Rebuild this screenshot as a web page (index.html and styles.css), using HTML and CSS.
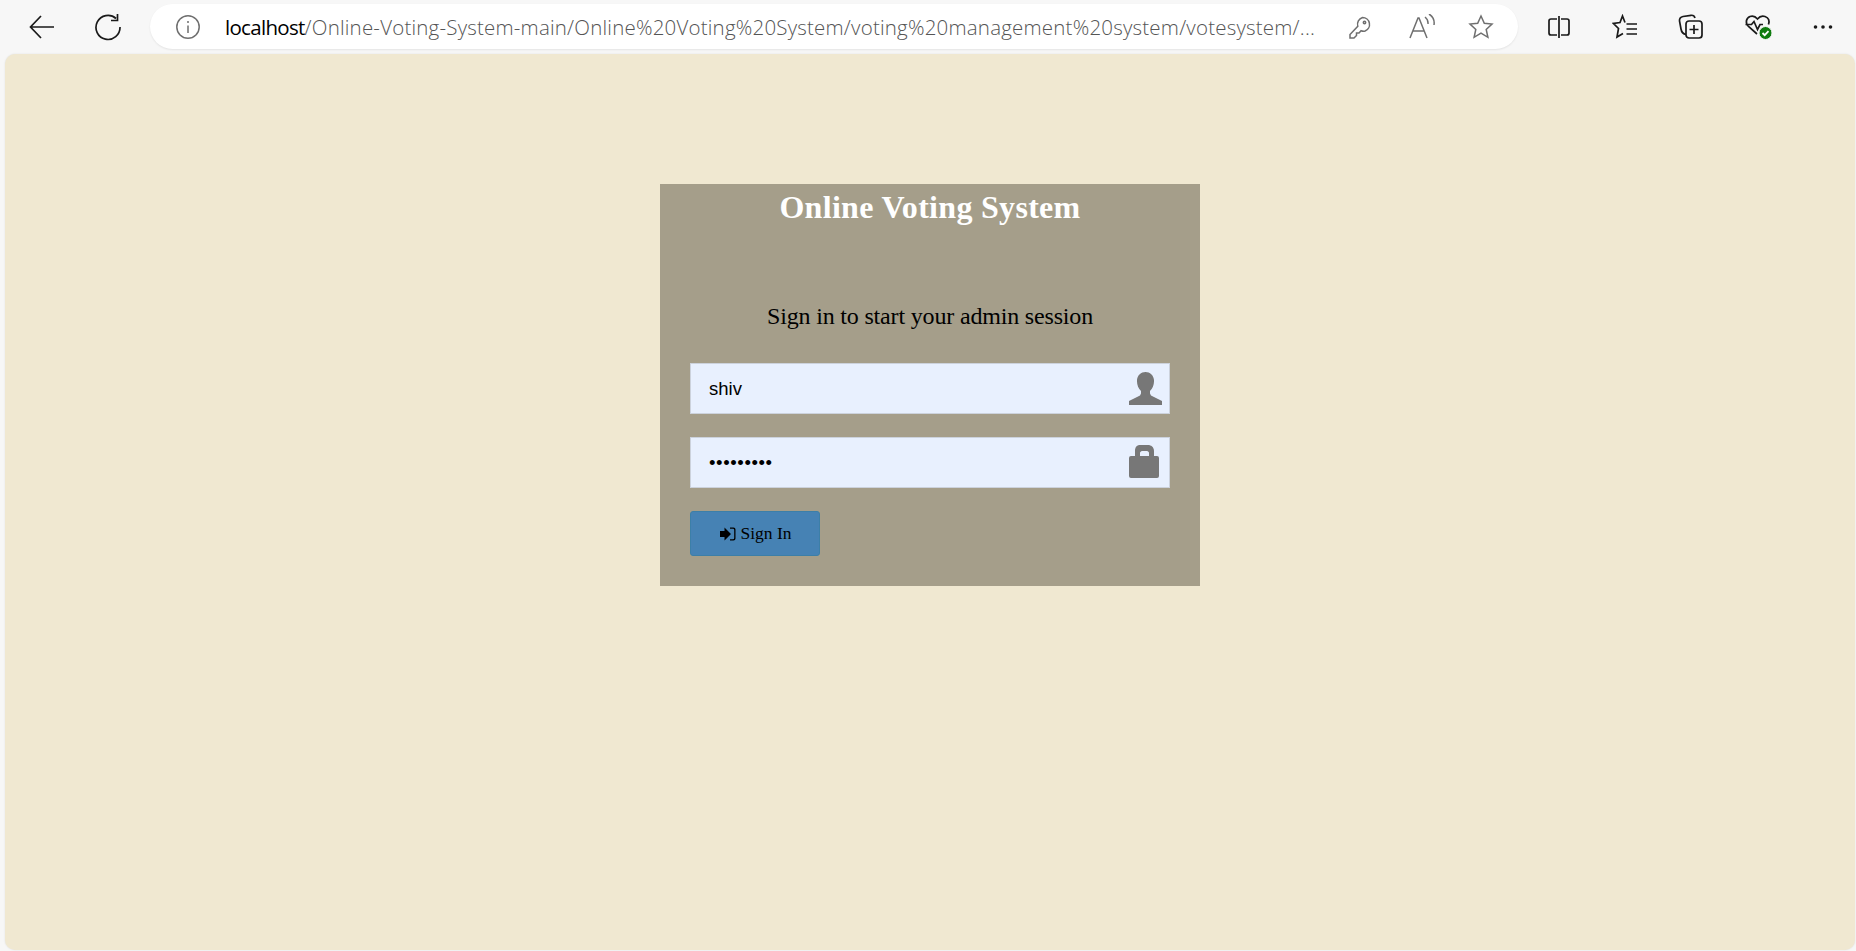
FILE: index.html
```html
<!DOCTYPE html>
<html lang="en">
  <head>
    <meta charset="UTF-8" />
    <title>Online Voting System</title>
    <link rel="stylesheet" href="styles.css">
  </head>
  <body>
    <header class="toolbar">
      <button class="tool nav-back" type="button" aria-label="Back">
        <svg width="28" height="28" viewBox="0 0 28 28"><path d="M26 14H2.500M13 3 2.500 14 13 25" /></svg>
      </button>
      <button class="tool nav-reload" type="button" aria-label="Refresh">
        <svg width="28" height="28" viewBox="0 0 28 28"><path d="M22 5.500A12 12 0 1 0 26 14M23.500 1v6.500H17" /></svg>
      </button>

      <div class="address">
        <svg class="address-info" width="26" height="26" viewBox="0 0 26 26">
          <circle cx="13" cy="13" r="11.200" />
          <path d="M13 11.500v7.500M13 7v2" />
        </svg>
        <span class="address-url"><b>localhost</b>/Online-Voting-System-main/Online%20Voting%20System/voting%20management%20system/votesystem/...</span>
        <svg class="address-key" width="24" height="24" viewBox="0 0 24 24">
          <path d="M14.500 2.500a7 7 0 0 1 2.600 13.500 7 7 0 0 1-4-.3L11 18H8.500v2.500L6 23H2v-3.500l7.800-8.300a7 7 0 0 1 4.700-8.700Z" />
          <circle cx="16.500" cy="7.500" r="1.200" />
        </svg>
        <svg class="address-read" width="28" height="26" viewBox="0 0 28 26">
          <path d="M2 24 10 4h1l8 20M5 17h11M17 3a8 8 0 0 1 3 7M21 0a11 11 0 0 1 5 11" />
        </svg>
        <svg class="address-star" width="26" height="26" viewBox="0 0 26 26">
          <path d="m13 2 3.300 7.300 7.700.8-5.800 5.300 1.700 7.900L13 19.200l-6.900 4.100 1.700-7.900L2 10.100l7.700-.8Z" />
        </svg>
      </div>

      <div class="tools">
        <button class="tool" type="button" aria-label="Split screen">
          <svg width="24" height="24" viewBox="0 0 24 24"><path d="M10 4H4a2 2 0 0 0-2 2v12a2 2 0 0 0 2 2h6M14 4h6a2 2 0 0 1 2 2v12a2 2 0 0 1-2 2h-6M12 1v22" /></svg>
        </button>
        <button class="tool" type="button" aria-label="Favorites">
          <svg width="26" height="26" viewBox="0 0 26 26"><path d="M13 8.500 10.500 2 8 8.500 1.500 9.500 6.500 14.500 5 23 11 19.500M14.500 10H25M14.500 15H25M14.500 20H25" /></svg>
        </button>
        <button class="tool" type="button" aria-label="Collections">
          <svg width="26" height="26" viewBox="0 0 26 26"><path d="M8 20.500C5 20 3.500 18 3 15L1.500 7C1.300 4.500 2.500 3 5 2.500l8-1.200c2-.2 3.500.7 4 2.700" /><rect x="8" y="7" width="16" height="17" rx="3" /><path d="M16 11v9M11.500 15.500h9" /></svg>
        </button>
        <button class="tool tool-health" type="button" aria-label="Browser essentials">
          <svg width="30" height="30" viewBox="0 0 30 30">
            <path d="M13 22 4.500 14.500C1 11 2 6 6 4.500c3-1 5.500 0 7.500 2.500 2-2.500 4.500-3.500 7.500-2.500 4 1.500 4.500 5 3.500 8" />
            <path d="M1.500 12.500h6l2.500-3 3.500 8 2.500-5h3" />
            <circle class="health-dot" cx="21.500" cy="21" r="6.500" />
            <path class="health-check" d="m18.500 21 2.200 2.200 3.800-4" />
          </svg>
        </button>
        <button class="tool tool-more" type="button" aria-label="Settings and more">
          <svg width="20" height="6" viewBox="0 0 20 6"><circle cx="2.500" cy="3" r="1.800" /><circle cx="10" cy="3" r="1.800" /><circle cx="17.500" cy="3" r="1.800" /></svg>
        </button>
      </div>
    </header>

    <main class="page">
      <section class="login-box">
        <h1 class="login-title">Online Voting System</h1>
        <p class="login-msg">Sign in to start your admin session</p>
        <form class="login-form">
          <div class="field">
            <input class="field-input" type="text" value="shiv" />
            <svg class="field-icon icon-user" width="33" height="33" viewBox="0 0 33 33">
              <path d="M0 33v-4l4-2 7-3.500 1-2v-2.500C9.500 16.500 8 13 8 9.500V8c.5-5 4-8 8.500-8s8 3 8.500 8v1.500c0 3.500-1.500 7-4 9.500v2.500l1 2 7 3.500 4 2v4Z" />
            </svg>
          </div>
          <div class="field">
            <input class="field-input input-password" type="password" value="123456789" />
            <svg class="field-icon icon-lock" width="30" height="33" viewBox="0 0 30 33">
              <path fill-rule="evenodd" d="M6 11V6c0-4 2-6 5-6h8c3 0 6 2 6 6v5h3a2 2 0 0 1 2 2v18a2 2 0 0 1-2 2H2a2 2 0 0 1-2-2V13a2 2 0 0 1 2-2Zm5 0h9V8c0-1-1-2-2-2h-5c-1 0-2 1-2 2Z" />
            </svg>
          </div>
          <button class="signin-btn" type="button">
            <svg width="16" height="14" viewBox="0 0 16 14">
              <path d="M0 4h4.500V0.500L11 7l-6.500 6.500V10H0Z" />
              <path d="M10 0.500h3.500a2 2 0 0 1 2 2v9a2 2 0 0 1-2 2H10v-1.200h3a1.200 1.200 0 0 0 1.200-1.200V2.900A1.200 1.200 0 0 0 13 1.700h-3Z" />
            </svg>
            Sign In
          </button>
        </form>
      </section>
    </main>
  </body>
</html>
```

FILE: styles.css
```css
* {
  margin: 0;
  padding: 0;
  box-sizing: border-box;
}

html,
body {
  height: 100%;
  overflow: hidden;
}

body {
  display: flex;
  flex-direction: column;
  background-color: #f7f7f7;
  font-family: "Liberation Serif", serif;
}

/* browser toolbar */
.toolbar {
  height: 54px;
  flex: none;
  display: flex;
  align-items: center;
  padding: 0 0 1px 28px;
}

.tool {
  border: none;
  background: none;
  display: flex;
  align-items: center;
  justify-content: center;
  color: #1a1a1a;
}

.tool svg {
  fill: none;
  stroke: currentColor;
  stroke-width: 1.7;
}

.nav-back {
  width: 28px;
}

.nav-reload {
  width: 28px;
  margin-left: 38px;
}

.address {
  width: 1368px;
  height: 45px;
  margin-left: 28px;
  flex: none;
  display: flex;
  align-items: center;
  padding-left: 25px;
  background: #fff;
  border-radius: 23px;
  box-shadow: 0 1px 2px rgba(0, 0, 0, 0.08);
}

.address svg {
  flex: none;
  fill: none;
  stroke: #6f6f6f;
  stroke-width: 1.5;
}

.address-url {
  margin-left: 24px;
  width: 1123px;
  flex: none;
  font-family: "Open Sans", sans-serif;
  font-size: 20.500px;
  font-weight: 300;
  letter-spacing: 0.2px;
  white-space: nowrap;
  overflow: hidden;
  color: #555;
}

.address-url b {
  font-weight: 400;
  letter-spacing: -0.7px;
  color: #000;
}

.address-read {
  margin-left: 36px;
}

.address-star {
  margin-left: 32px;
}

.tools {
  display: grid;
  grid-template-columns: repeat(5, 66px);
  padding-left: 8px;
}

.tool-health {
  padding-left: 4px;
}

.tool-health .health-dot {
  fill: #107c10;
  stroke: #f7f7f7;
  stroke-width: 1;
}

.tool-health .health-check {
  stroke: #fff;
  stroke-width: 1.800;
}

.tool-more svg {
  fill: #1a1a1a;
  stroke: none;
}

/* page viewport */
.page {
  flex: 1;
  margin: 0 1px 1px 5px;
  padding-top: 130px;
  background-color: #f0e8d1;
  border-radius: 10px;
  box-shadow: 0 0 2px rgba(0, 0, 0, 0.1);
}

.login-box {
  width: 540px;
  height: 402px;
  margin: 0 auto;
  padding: 0 30px;
  background-color: #a59e8a;
}

.login-title {
  text-align: center;
  color: #fff;
  font-size: 32px;
  font-weight: 700;
  letter-spacing: 0.3px;
  line-height: 47px;
}

.login-msg {
  margin-top: 72px;
  text-align: center;
  color: #000;
  font-size: 24px;
  letter-spacing: -0.17px;
  line-height: 26px;
}

.login-form {
  margin-top: 34px;
  display: flex;
  flex-direction: column;
  gap: 23px;
}

.field {
  position: relative;
}

.field-input {
  display: block;
  width: 100%;
  height: 51px;
  padding: 0 18px;
  border: 1px solid #ccd2dc;
  background-color: #e8f0fe;
  color: #000;
  font-family: "Liberation Sans", sans-serif;
  font-size: 18.500px;
  outline: none;
}

.input-password {
  letter-spacing: 0.6px;
}

.field-icon {
  position: absolute;
  right: 8px;
  fill: #777;
}

.icon-user {
  top: 9px;
}

.icon-lock {
  top: 8px;
  right: 11px;
}

.signin-btn {
  width: 130px;
  height: 45px;
  padding-left: 2px;
  display: flex;
  align-items: center;
  justify-content: center;
  gap: 4px;
  background-color: #4682b4;
  border: 1px solid #3c7fa8;
  border-radius: 3px;
  color: #000;
  font-family: "Liberation Serif", serif;
  font-size: 17.500px;
}
```
